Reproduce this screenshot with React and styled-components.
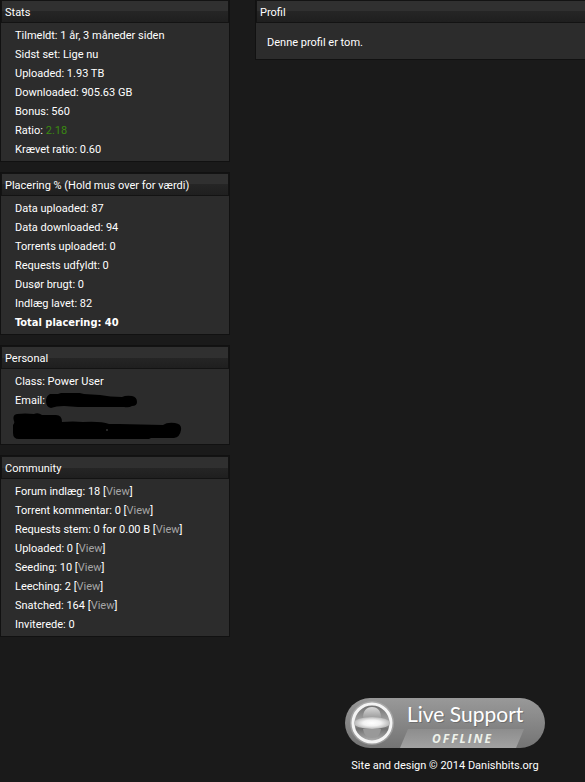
import styled, { createGlobalStyle } from "styled-components";

const GlobalStyle = createGlobalStyle`
  * {
    box-sizing: border-box;
  }

  body {
    margin: 0;
    background-color: #1a1a1a;
    color: #fff;
    font-family: Roboto, Tahoma, sans-serif;
    font-size: 11px;
    line-height: 19px;
    overflow-x: hidden;
  }
`;

const Page = styled.div`
  margin-top: -1px;
`;

const Columns = styled.main`
  display: flex;
  align-items: flex-start;
  gap: 25px;
`;

const Sidebar = styled.aside`
  flex: 0 0 230px;
  display: flex;
  flex-direction: column;
  gap: 10px;
`;

const Content = styled.section`
  flex: 1;
  margin-right: -4px;
`;

const StyledBox = styled.section`
  border: 1px solid #111;
  background-color: #2c2c2c;
`;

const BoxHeading = styled.h2`
  margin: 0;
  height: 23px;
  padding: 0 3px;
  border: 1px solid #131313;
  background: linear-gradient(#303030 0 50%, #252525 50%, #1f1f1f);
  font-size: 11px;
  font-weight: normal;
  line-height: 23px;
  white-space: nowrap;
`;

const StatList = styled.ul`
  margin: 0;
  padding: 3px 14px 2px;
  list-style: none;
  white-space: nowrap;
`;

const Stat = styled.li`
  height: 19px;
`;

const TotalStat = styled(Stat)`
  font-family: "DejaVu Sans Condensed", Tahoma, sans-serif;
  font-weight: bold;
`;

const Ratio = styled.span`
  color: #3a8a10;
`;

const ViewLink = styled.a`
  color: #a6a6a6;
  text-decoration: none;
`;

const EmailStat = styled(Stat)`
  display: flex;
  align-items: center;
  gap: 1px;
`;

const HiddenDetails = styled.li`
  height: 32px;
  margin-left: -2px;
  padding-top: 3px;

  > svg {
    display: block;
  }
`;

const ProfileText = styled.p`
  margin: 0;
  padding: 10px 11px 7px;
`;

const Footer = styled.footer`
  margin-top: 61px;
  padding-left: 305px;
  display: flex;
  flex-direction: column;
  align-items: center;
  gap: 8px;
  white-space: nowrap;
`;

const SupportButton = styled.button`
  padding: 0;
  border: 0;
  background: none;
  cursor: pointer;

  > svg {
    display: block;
  }
`;

const community = [
  { label: "Forum indlæg: 18", link: true },
  { label: "Torrent kommentar: 0", link: true },
  { label: "Requests stem: 0 for 0.00 B", link: true },
  { label: "Uploaded: 0", link: true },
  { label: "Seeding: 10", link: true },
  { label: "Leeching: 2", link: true },
  { label: "Snatched: 164", link: true },
  { label: "Inviterede: 0", link: false },
];

function Box({ title, children }) {
  return (
    <StyledBox>
      <BoxHeading>{title}</BoxHeading>
      {children}
    </StyledBox>
  );
}

function LiveSupport() {
  return (
    <SupportButton type="button">
      <svg width="200" height="50" viewBox="0 0 200 50">
        <defs>
          <linearGradient id="pill" x1="0" y1="0" x2="0" y2="1">
            <stop offset="0" stopColor="#999" />
            <stop offset="1" stopColor="#747474" />
          </linearGradient>
          <linearGradient id="ribbon" x1="0" y1="0" x2="0" y2="1">
            <stop offset="0" stopColor="#8d8d8d" />
            <stop offset="1" stopColor="#a2a2a2" />
          </linearGradient>
          <linearGradient id="ball" x1="0" y1="0" x2="0" y2="1">
            <stop offset="0" stopColor="#6c6c6c" />
            <stop offset="0.5" stopColor="#aaa" />
            <stop offset="0.65" stopColor="#707070" />
            <stop offset="1" stopColor="#b5b5b5" />
          </linearGradient>
          <linearGradient id="dome" x1="0" y1="0" x2="0" y2="1">
            <stop offset="0" stopColor="#d8d8d8" />
            <stop offset="1" stopColor="#9c9c9c" />
          </linearGradient>
          <radialGradient id="disc">
            <stop offset="0" stopColor="#fff" />
            <stop offset="0.5" stopColor="#f2f2f2" />
            <stop offset="1" stopColor="#b8b8b8" />
          </radialGradient>
        </defs>
        <rect width="200" height="50" rx="25" fill="url(#pill)" />
        <path d="M63 31h116l-8 19H55z" fill="url(#ribbon)" />
        <circle cx="27" cy="25" r="22" fill="#bbb" opacity="0.5" />
        <circle cx="27" cy="25" r="19" fill="url(#ball)" stroke="#f4f4f4" strokeWidth="3" />
        <path d="M18 20c0-7 3-11 9-11s9 4 9 11z" fill="url(#dome)" />
        <path d="M18 31h18c-1 6-4 9-9 9s-8-3-9-9z" fill="#999" />
        <ellipse cx="27" cy="25" rx="18" ry="6" fill="url(#disc)" />
        <text x="63" y="25" fontFamily="Lato, sans-serif" fontSize="21" fill="#555" opacity="0.5" aria-hidden="true">
          Live Support
        </text>
        <text x="62" y="24" fontFamily="Lato, sans-serif" fontSize="21" fill="#fff">
          Live Support
        </text>
        <text
          x="87"
          y="45"
          fontFamily="'Open Sans', sans-serif"
          fontSize="12"
          fontWeight="bold"
          fontStyle="italic"
          letterSpacing="2"
          fill="#eef2ea"
        >
          OFFLINE
        </text>
      </svg>
    </SupportButton>
  );
}

function App() {
  return (
    <Page>
      <GlobalStyle />
      <Columns>
        <Sidebar>
          <Box title="Stats">
            <StatList>
              <Stat>Tilmeldt: 1 år, 3 måneder siden</Stat>
              <Stat>Sidst set: Lige nu</Stat>
              <Stat>Uploaded: 1.93 TB</Stat>
              <Stat>Downloaded: 905.63 GB</Stat>
              <Stat>Bonus: 560</Stat>
              <Stat>
                Ratio: <Ratio>2.18</Ratio>
              </Stat>
              <Stat>Krævet ratio: 0.60</Stat>
            </StatList>
          </Box>

          <Box title="Placering % (Hold mus over for værdi)">
            <StatList>
              <Stat>Data uploaded: 87</Stat>
              <Stat>Data downloaded: 94</Stat>
              <Stat>Torrents uploaded: 0</Stat>
              <Stat>Requests udfyldt: 0</Stat>
              <Stat>Dusør brugt: 0</Stat>
              <Stat>Indlæg lavet: 82</Stat>
              <TotalStat>Total placering: 40</TotalStat>
            </StatList>
          </Box>

          <Box title="Personal">
            <StatList>
              <Stat>Class: Power User</Stat>
              <EmailStat>
                Email:
                <svg width="92" height="16" viewBox="0 0 92 16">
                  <path d="M4 1Q8 1 12 1Q16-1 24 0Q32-1 38 1L54 2Q64 4 76 4Q80 2 86 3Q91 4 91 9Q91 13 86 13Q83 15 78 14L32 14L18 13Q10 13 5 15Q0 14 0 8Q0 3 4 1z" />
                </svg>
              </EmailStat>
              <HiddenDetails>
                <svg width="169" height="27" viewBox="0 0 169 27">
                  <path d="M4 1Q12 0 21 1Q25-1 29 2L43 2Q49 2 49 9Q60 8 70 9Q88 8 96 11L106 11L150 12Q154 9 162 10Q169 11 168 17Q167 24 161 25L138 25L136 26L6 26Q0 26 0 20L0 12Q2 10 1 8Q-1 2 4 1z" />
                  <circle cx="94" cy="17" r="1" fill="#333" />
                </svg>
              </HiddenDetails>
            </StatList>
          </Box>

          <Box title="Community">
            <StatList>
              {community.map((item) => (
                <Stat key={item.label}>
                  {item.label}
                  {item.link && (
                    <>
                      {" "}
                      [<ViewLink href="#">View</ViewLink>]
                    </>
                  )}
                </Stat>
              ))}
            </StatList>
          </Box>
        </Sidebar>

        <Content>
          <Box title="Profil">
            <ProfileText>Denne profil er tom.</ProfileText>
          </Box>
        </Content>
      </Columns>

      <Footer>
        <LiveSupport />
        <span>Site and design © 2014 Danishbits.org</span>
      </Footer>
    </Page>
  );
}

export default App;
